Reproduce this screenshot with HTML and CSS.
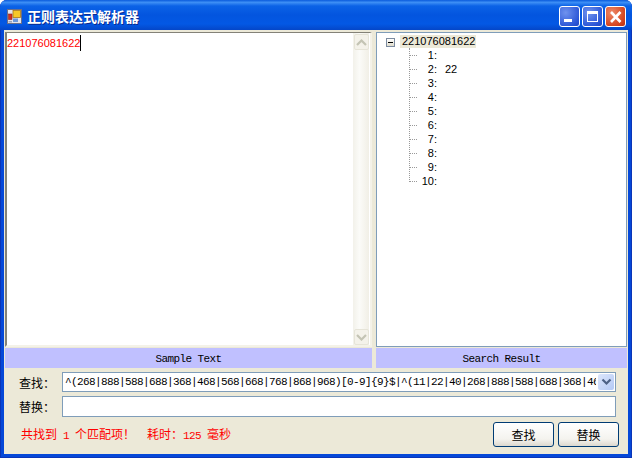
FILE: index.html
```html
<!DOCTYPE html>
<html lang="zh">
<head>
<meta charset="utf-8">
<title>正则表达式解析器</title>
<link rel="stylesheet" href="styles.css">
</head>
<body>
<div class="window">
  <header class="titlebar">
    <svg class="app-icon" width="15" height="15" viewBox="0 0 15 15">
      <rect x="0.5" y="0.5" width="14" height="14" fill="#e4e4ec" stroke="#6a6f88"/>
      <rect x="6" y="1.5" width="7.5" height="7" fill="#f6c828" stroke="#a87818" stroke-width="0.8"/>
      <rect x="1.5" y="5" width="3.5" height="5.5" fill="#d03020" stroke="#902018" stroke-width="0.6"/>
      <rect x="6" y="9.5" width="5" height="3.5" fill="#6c98dc"/>
      <rect x="1.5" y="12" width="3.5" height="1.5" fill="#9aa0b8"/>
    </svg>
    <span class="title">正则表达式解析器</span>
    <div class="caption-buttons">
      <span class="cap cap-blue"><svg width="19" height="19" viewBox="0 0 19 19"><rect x="4" y="12" width="8" height="3" fill="#fff"/></svg></span>
      <span class="cap cap-blue"><svg width="19" height="19" viewBox="0 0 19 19"><path d="M4 4h11v11H4z M5 7v7h9V7z" fill="#fff" fill-rule="evenodd"/></svg></span>
      <span class="cap cap-red"><svg width="19" height="19" viewBox="0 0 19 19"><path d="M5 5l9.5 10M14.5 5L5 15" stroke="#fff" stroke-width="2.6" fill="none"/></svg></span>
    </div>
  </header>
  <div class="client">
    <div class="panes">
      <section class="pane pane-left">
        <div class="textbox">
          <div class="editor"><span class="typed">221076081622</span><span class="caret"></span></div>
          <div class="scrollbar">
            <span class="sb-btn"><svg width="11" height="7" viewBox="0 0 11 7"><path d="M1 6L5.5 1.5 10 6" stroke="#c4c4b4" stroke-width="2.2" fill="none"/></svg></span>
            <span class="sb-track"></span>
            <span class="sb-btn"><svg width="11" height="7" viewBox="0 0 11 7"><path d="M1 1L5.5 5.5 10 1" stroke="#c4c4b4" stroke-width="2.2" fill="none"/></svg></span>
          </div>
        </div>
        <div class="pane-label">Sample Text</div>
      </section>
      <div class="splitter"></div>
      <section class="pane pane-right">
        <div class="treebox">
          <div class="root-row">
            <span class="expander"><span class="minus"></span></span>
            <span class="root-text">221076081622</span>
          </div>
          <ul class="children">
            <li><span class="num">1:</span></li>
            <li><span class="num">2:</span><span class="val">22</span></li>
            <li><span class="num">3:</span></li>
            <li><span class="num">4:</span></li>
            <li><span class="num">5:</span></li>
            <li><span class="num">6:</span></li>
            <li><span class="num">7:</span></li>
            <li><span class="num">8:</span></li>
            <li><span class="num">9:</span></li>
            <li><span class="num">10:</span></li>
          </ul>
        </div>
        <div class="pane-label">Search Result</div>
      </section>
    </div>
    <div class="form">
      <div class="form-row">
        <label class="field-label">查找：</label>
        <div class="combo">
          <span class="combo-text">^(268|888|588|688|368|468|568|668|768|868|968)[0-9]{9}$|^(11|22|40|268|888|588|688|368|468|568|668|768|868|968)[0-9]{9}$</span>
          <span class="combo-btn"><svg width="11" height="8" viewBox="0 0 11 8"><path d="M1.5 1.5L5.5 5.5l4-4" stroke="#4d6185" stroke-width="2.2" fill="none"/></svg></span>
        </div>
      </div>
      <div class="form-row row-replace">
        <label class="field-label">替换：</label>
        <div class="input"></div>
      </div>
      <div class="status-row">
        <div class="status">
          <span>共找到<span class="mono"> 1 </span>个匹配项！</span>
          <span class="elapsed">耗时：<span class="mono">125 </span>毫秒</span>
        </div>
        <div class="buttons">
          <button class="btn">查找</button>
          <button class="btn">替换</button>
        </div>
      </div>
    </div>
  </div>
</div>
</body>
</html>
```
FILE: styles.css
```css
* { box-sizing: border-box; }
html, body { margin: 0; padding: 0; background: #fff; }
body { width: 632px; height: 458px; overflow: hidden; font-family: "Liberation Sans", "Noto Sans CJK SC", sans-serif; font-size: 11px; }
.window { width: 632px; height: 458px; display: flex; flex-direction: column; background: #0548d8; box-shadow: inset 1px 0 #0a35b8, inset -1px 0 #0a35b8, inset 0 -1px #0a35b8; border-radius: 7px 7px 0 0; overflow: hidden; }
.titlebar { height: 30px; flex: none; display: flex; align-items: center; padding: 0 6px 0 7px; background: linear-gradient(180deg, #0a5bdc 0%, #3d8ff5 8%, #0b62e6 20%, #0355df 50%, #0358e4 80%, #0446c8 100%); }
.app-icon { flex: none; margin-top: 2px; }
.title { margin-left: 5px; margin-top: 1px; color: #fff; font: bold 14px "Noto Sans CJK SC", sans-serif; text-shadow: 1px 1px 0 #0a2a90; }
.caption-buttons { margin-left: auto; align-self: flex-start; margin-top: 6px; display: flex; gap: 2px; }
.cap { width: 21px; height: 21px; border: 1px solid #fff; border-radius: 3px; display: flex; align-items: center; justify-content: center; }
.cap-blue { background: radial-gradient(circle at 30% 30%, #6f92ee, #2a55d6 75%, #2347c0); }
.cap-red { background: radial-gradient(circle at 30% 30%, #ee8a68, #d5451f 70%, #b83010); }
.client { flex: 1; margin: 0 4px 4px; background: #ece9d8; display: flex; flex-direction: column; min-height: 0; }
.panes { height: 338px; flex: none; display: flex; padding: 2px 1px 0; }
.pane { display: flex; flex-direction: column; }
.pane-left { width: 367px; }
.pane-right { width: 251px; }
.splitter { width: 4px; }
.textbox { flex: 1; display: flex; background: #fff; border: 2px solid; border-top-width: 1px; border-color: #848278 #f4f2e8 #f4f2e8 #848278; padding-right: 1px; min-height: 0; }
.editor { flex: 1; padding: 4px 0 0; font-size: 11px; line-height: 13px; color: #f00; display: flex; align-items: flex-start; }
.caret { width: 1px; height: 16px; background: #000; margin-top: -2px; }
.scrollbar { width: 16px; display: flex; flex-direction: column; padding: 1px 0 0; background: linear-gradient(90deg, #f2f1ea, #fbfbf8 40%, #f1efe6); }
.sb-btn { height: 16px; flex: none; margin: 0 0 0 1px; border: 1px solid #e6e4d8; border-radius: 2px; background: #f4f2ea; display: flex; align-items: center; justify-content: center; }
.sb-track { flex: 1; }
.treebox { flex: 1; background: #fff; border: 1px solid #7f9db9; padding: 1px 0 0 9px; min-height: 0; }
.root-row { display: flex; align-items: flex-start; height: 14px; }
.expander { width: 9px; height: 9px; margin-top: 4px; border: 1px solid #7b8ba0; background: linear-gradient(180deg, #fff, #e0dccc); display: flex; align-items: center; justify-content: center; }
.minus { width: 5px; height: 1px; background: #000; }
.root-text { margin-left: 5px; margin-top: 1px; padding: 0 1px 0 2px; height: 13px; line-height: 13px; background: #ece9d8; color: #000; }
.children { list-style: none; margin: 0 0 0 23px; padding: 0; position: relative; width: 60px; }
.children::before { content: ""; position: absolute; left: 0; top: 0; bottom: 6px; border-left: 1px dotted #999; }
.children li { height: 14px; line-height: 14px; display: flex; color: #000; }
.children li::before { content: ""; width: 8px; flex: none; margin-top: 7px; height: 0; border-top: 1px dotted #999; }
.num { width: 20px; text-align: right; flex: none; }
.val { margin-left: 8px; }
.pane-label { height: 20px; flex: none; margin-top: 1px; background: #c0c0ff; color: #000; font: 11px/22px "Liberation Mono", monospace; letter-spacing: -0.6px; text-align: center; }
.form { flex: 1; display: flex; flex-direction: column; padding: 4px 0 0 15px; }
.form-row { display: flex; align-items: center; height: 20px; }
.row-replace { margin-top: 4px; height: 21px; }
.field-label { width: 43px; flex: none; font: 12px "Noto Sans CJK JP", sans-serif; color: #000; }
.combo { width: 554px; height: 20px; border: 1px solid #7f9db9; background: #fff; display: flex; align-items: stretch; }
.combo-text { flex: 1; min-width: 0; overflow: hidden; white-space: nowrap; font: 11px/18px "Liberation Mono", monospace; letter-spacing: -0.6px; padding-left: 2px; }
.combo-btn { width: 16px; flex: none; margin: 1px 1px 1px 2px; background: linear-gradient(135deg, #dce6fb, #b4c9f5); border-radius: 2px; display: flex; align-items: center; justify-content: center; }
.input { width: 554px; height: 21px; border: 1px solid #7f9db9; background: #fff; }
.status-row { display: flex; justify-content: space-between; margin-top: 5px; padding-right: 9px; }
.status { margin-left: 2px; color: #f00; font: 12px/24px "Noto Sans CJK JP", sans-serif; display: flex; }
.mono { font: 11px "Liberation Mono", monospace; letter-spacing: -0.6px; white-space: pre; }
.elapsed { margin-left: 12px; }
.buttons { display: flex; gap: 4px; }
.btn { width: 61px; height: 25px; padding: 0; border: 1px solid #003c74; border-radius: 3px; background: linear-gradient(180deg, #fff, #f4f3ee 70%, #dcd8ce); font: 12px "Noto Sans CJK JP", sans-serif; color: #000; }
```
